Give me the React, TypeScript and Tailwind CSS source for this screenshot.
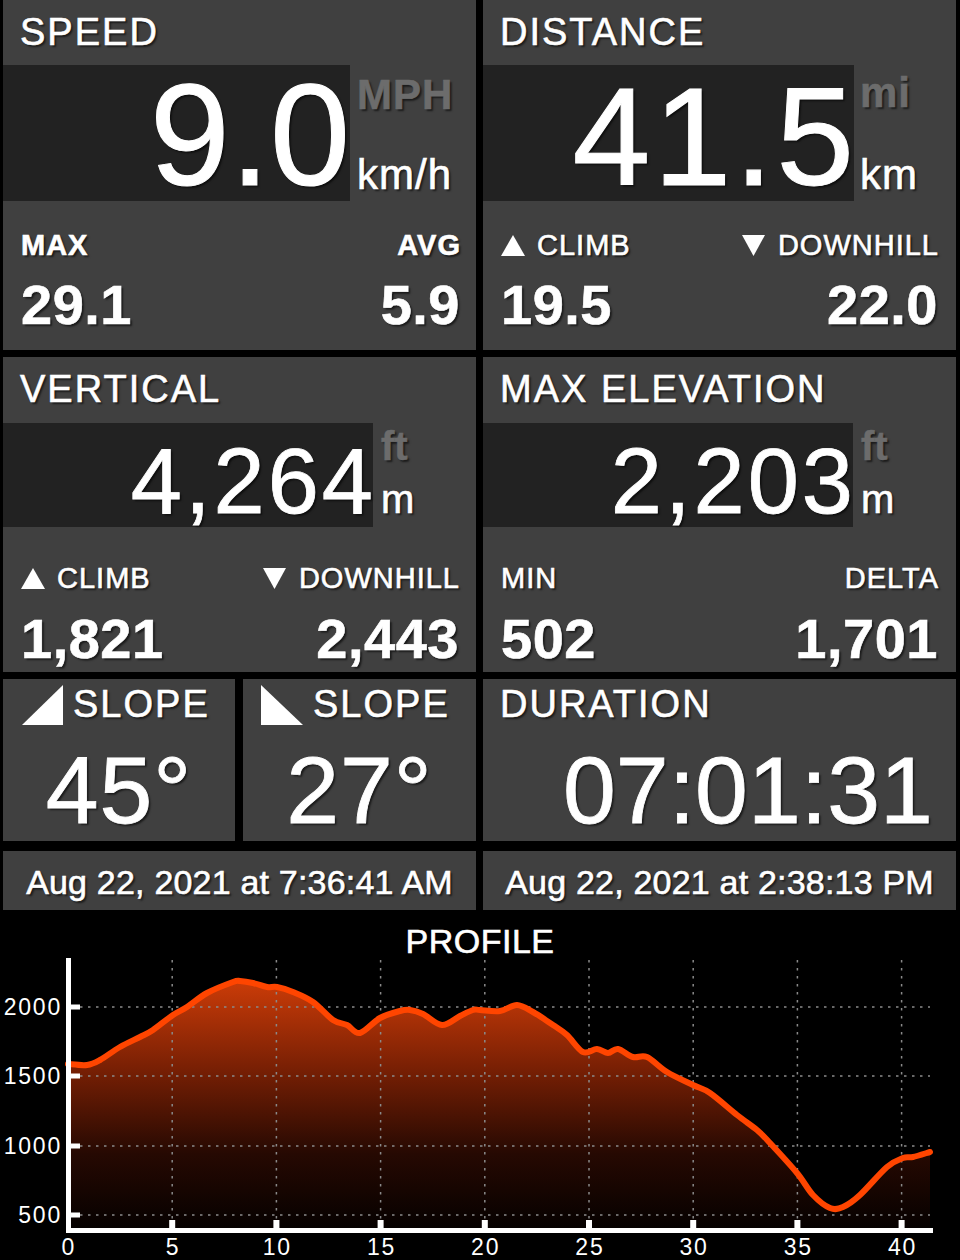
const shadow = '[text-shadow:2px_2px_2px_rgba(0,0,0,0.6)]';

type Stat = { label: string; value: string; tri?: 'up' | 'down'; bold?: boolean };

function Tri({ dir }: { dir: 'up' | 'down' }) {
  if (dir === 'up') {
    return (
      <svg width="24" height="21" viewBox="0 0 24 21" className="shrink-0">
        <polygon points="12,0 24,21 0,21" fill="#ffffff" />
      </svg>
    );
  }
  return (
    <svg width="23" height="21" viewBox="0 0 23 21" className="shrink-0">
      <polygon points="0,0 23,0 11.5,21" fill="#ffffff" />
    </svg>
  );
}

function Label({ stat }: { stat: Stat }) {
  return (
    <div className={`flex items-center ${stat.bold ? 'font-bold' : ''}`}>
      {stat.tri && (
        <span className={stat.tri === 'up' ? 'mr-[12px]' : 'mr-[13px]'}>
          <Tri dir={stat.tri} />
        </span>
      )}
      <span className="tracking-[1px] -mr-[1px]">{stat.label}</span>
    </div>
  );
}

function Footer({ left, right, labelMt, valueMt, pr }: { left: Stat; right: Stat; labelMt: string; valueMt: string; pr: string }) {
  return (
    <div className={`pl-[18px] ${pr} ${shadow}`}>
      <div className={`${labelMt} flex justify-between items-center text-[29px] leading-none`}>
        <Label stat={left} />
        <Label stat={right} />
      </div>
      <div className={`${valueMt} flex justify-between text-[56px] font-bold leading-none tracking-[0.5px]`}>
        <span>{left.value}</span>
        <span>{right.value}</span>
      </div>
    </div>
  );
}

const pts: [number, number][] = [
  [68, 1064], [87, 1065], [100, 1060], [120, 1047], [140, 1037], [153, 1030], [173, 1015], [187, 1007],
  [207, 993], [233, 982], [240, 981], [253, 983], [267, 987], [277, 987], [293, 992], [313, 1002],
  [333, 1020], [347, 1025], [360, 1033], [380, 1018], [400, 1011], [410, 1010], [423, 1014], [442, 1025],
  [460, 1016], [473, 1010], [480, 1010], [500, 1011], [517, 1005], [533, 1012], [553, 1025], [567, 1035],
  [583, 1052], [597, 1049], [608, 1053], [618, 1049], [633, 1057], [647, 1057], [667, 1072], [693, 1085],
  [710, 1093], [737, 1115], [757, 1130], [770, 1143], [797, 1173], [813, 1195], [830, 1208], [843, 1207],
  [860, 1195], [887, 1167], [903, 1158], [913, 1157], [930, 1152],
];

function smooth(p: [number, number][]) {
  let d = `M${p[0][0]},${p[0][1]}`;
  for (let i = 0; i < p.length - 1; i++) {
    const p0 = p[i - 1] || p[i];
    const p1 = p[i];
    const p2 = p[i + 1];
    const p3 = p[i + 2] || p2;
    const c1x = p1[0] + (p2[0] - p0[0]) / 6;
    const c1y = p1[1] + (p2[1] - p0[1]) / 6;
    const c2x = p2[0] - (p3[0] - p1[0]) / 6;
    const c2y = p2[1] - (p3[1] - p1[1]) / 6;
    d += ` C${c1x.toFixed(1)},${c1y.toFixed(1)} ${c2x.toFixed(1)},${c2y.toFixed(1)} ${p2[0]},${p2[1]}`;
  }
  return d;
}

const yTicks = [
  { v: '2000', y: 1007 },
  { v: '1500', y: 1076 },
  { v: '1000', y: 1146 },
  { v: '500', y: 1215 },
];
const xTicks = [0, 5, 10, 15, 20, 25, 30, 35, 40].map((k) => ({ k, x: 68 + k * 20.84 }));

function Profile() {
  const line = smooth(pts);
  const area = `${line} L930,1228 L68,1228 Z`;
  return (
    <div className="h-[350px] bg-black">
      <div className={`h-[48px] pt-[14px] text-center text-[34px] leading-none tracking-[0.5px] ${shadow}`}>PROFILE</div>
      <svg width="960" height="302" viewBox="0 958 960 302" className="block [-webkit-text-stroke-width:0px]">
        <defs>
          <linearGradient id="fill" x1="0" y1="980" x2="0" y2="1228" gradientUnits="userSpaceOnUse">
            <stop offset="0" stopColor="#cc3c08" />
            <stop offset="0.35" stopColor="#7a2004" />
            <stop offset="0.7" stopColor="#260902" />
            <stop offset="1" stopColor="#060100" />
          </linearGradient>
        </defs>
        <path d={area} fill="url(#fill)" />
        {yTicks.map((t) => (
          <line key={t.v} x1="72" x2="930" y1={t.y} y2={t.y} stroke="#8a8a8a" strokeWidth="1.5" strokeDasharray="2.5 5.5" />
        ))}
        {xTicks.slice(1).map((t) => (
          <line key={t.k} x1={t.x} x2={t.x} y1="960" y2="1226" stroke="#8a8a8a" strokeWidth="1.5" strokeDasharray="2.5 5.5" />
        ))}
        <path d={line} fill="none" stroke="#ff4500" strokeWidth="6" strokeLinejoin="round" strokeLinecap="round" />
        <rect x="66" y="957" width="5" height="276" fill="#ffffff" />
        <rect x="66" y="1228" width="867" height="5" fill="#ffffff" />
        {yTicks.map((t) => (
          <rect key={t.v} x="71" y={t.y - 2.5} width="9" height="5" fill="#ffffff" />
        ))}
        {xTicks.slice(1).map((t) => (
          <rect key={t.k} x={t.x - 3} y="1220" width="6" height="8" fill="#ffffff" />
        ))}
        <g fill="#ffffff" fontFamily="'Liberation Sans', Arial, sans-serif" fontSize="23" letterSpacing="1.8">
          {yTicks.map((t) => (
            <text key={t.v} x="62" y={t.y + 8} textAnchor="end">{t.v}</text>
          ))}
          {xTicks.map((t) => (
            <text key={t.k} x={t.x + 0.9} y="1255" textAnchor="middle">{t.k}</text>
          ))}
        </g>
      </svg>
    </div>
  );
}

const title = `text-[38px] leading-none tracking-[2px] ${shadow}`;

export default function App() {
  return (
    <div className="w-[960px] h-[1260px] bg-black text-white font-['Liberation_Sans',Arial,sans-serif] [-webkit-text-stroke-width:0.6px] overflow-hidden">
      <div className="pl-[3px] pr-[4px]">
        {/* speed / distance */}
        <div className="grid grid-cols-2 gap-x-[7px]">
          <div className="h-[350px] bg-[#404040] flex flex-col">
            <div className={`h-[65px] pl-[17px] pt-[13px] ${title}`}>SPEED</div>
            <div className="flex h-[136px]">
              <div className="w-[347px] shrink-0 bg-[#222222] flex justify-end">
                <span className={`text-[144px] leading-none -mt-[1px] [-webkit-text-stroke-width:1px] ${shadow}`}>9.0</span>
              </div>
              <div className={`flex flex-col pl-[7px] tracking-[1px] ${shadow}`}>
                <span className="mt-[9px] text-[42px] leading-none font-bold text-[#6c6c6c]">MPH</span>
                <span className="mt-[38px] text-[42px] leading-none">km/h</span>
              </div>
            </div>
            <Footer
              left={{ label: 'MAX', value: '29.1', bold: true }}
              right={{ label: 'AVG', value: '5.9', bold: true }}
              labelMt="mt-[30px]"
              valueMt="mt-[17px]"
              pr="pr-[16px]"
            />
          </div>
          <div className="h-[350px] bg-[#404040] flex flex-col">
            <div className={`h-[65px] pl-[17px] pt-[13px] ${title}`}>DISTANCE</div>
            <div className="flex h-[136px]">
              <div className="w-[371px] shrink-0 bg-[#222222] flex justify-end">
                <span className={`text-[140px] leading-none tracking-[3px] -mr-[3px] mt-[2px] [-webkit-text-stroke-width:1px] ${shadow}`}>41.5</span>
              </div>
              <div className={`flex flex-col pl-[6px] tracking-[1px] ${shadow}`}>
                <span className="mt-[7px] text-[42px] leading-none font-bold text-[#6c6c6c]">mi</span>
                <span className="mt-[40px] text-[42px] leading-none">km</span>
              </div>
            </div>
            <Footer
              left={{ label: 'CLIMB', value: '19.5', tri: 'up' }}
              right={{ label: 'DOWNHILL', value: '22.0', tri: 'down' }}
              labelMt="mt-[30px]"
              valueMt="mt-[17px]"
              pr="pr-[18px]"
            />
          </div>
        </div>

        {/* vertical / elevation */}
        <div className="grid grid-cols-2 gap-x-[7px] mt-[7px]">
          <div className="h-[315px] bg-[#404040] flex flex-col">
            <div className={`h-[66px] pl-[17px] pt-[13px] ${title}`}>VERTICAL</div>
            <div className="flex h-[104px]">
              <div className="w-[370px] shrink-0 bg-[#222222] flex justify-end">
                <span className={`text-[92px] leading-none tracking-[3px] -mr-[3px] mt-[12px] [-webkit-text-stroke-width:0.8px] ${shadow}`}>4,264</span>
              </div>
              <div className={`flex flex-col pl-[8px] ${shadow}`}>
                <span className="mt-[3px] text-[40px] leading-none font-bold text-[#6c6c6c]">ft</span>
                <span className="mt-[13px] text-[40px] leading-none">m</span>
              </div>
            </div>
            <Footer
              left={{ label: 'CLIMB', value: '1,821', tri: 'up' }}
              right={{ label: 'DOWNHILL', value: '2,443', tri: 'down' }}
              labelMt="mt-[37px]"
              valueMt="mt-[18px]"
              pr="pr-[17px]"
            />
          </div>
          <div className="h-[315px] bg-[#404040] flex flex-col">
            <div className={`h-[66px] pl-[17px] pt-[13px] ${title}`}>MAX ELEVATION</div>
            <div className="flex h-[104px]">
              <div className="w-[370px] shrink-0 bg-[#222222] flex justify-end">
                <span className={`text-[92px] leading-none tracking-[3px] -mr-[3px] mt-[12px] [-webkit-text-stroke-width:0.8px] ${shadow}`}>2,203</span>
              </div>
              <div className={`flex flex-col pl-[8px] ${shadow}`}>
                <span className="mt-[3px] text-[40px] leading-none font-bold text-[#6c6c6c]">ft</span>
                <span className="mt-[13px] text-[40px] leading-none">m</span>
              </div>
            </div>
            <Footer
              left={{ label: 'MIN', value: '502' }}
              right={{ label: 'DELTA', value: '1,701' }}
              labelMt="mt-[37px]"
              valueMt="mt-[18px]"
              pr="pr-[18px]"
            />
          </div>
        </div>

        {/* slopes / duration */}
        <div className="grid grid-cols-2 gap-x-[7px] mt-[7px]">
          <div className="grid grid-cols-[232px_1fr] gap-x-[8px]">
            <div className="h-[162px] bg-[#404040]">
              <div className={`h-[40px] mt-[6px] pl-[19px] flex items-start ${shadow}`}>
                <svg width="41" height="40" viewBox="0 0 41 40" className="shrink-0">
                  <polygon points="0,40 41,0 41,40" fill="#ffffff" />
                </svg>
                <span className="ml-[10px] text-[38px] leading-none tracking-[2px]">SLOPE</span>
              </div>
              <div className={`mt-[18px] text-center text-[95px] leading-none tracking-[1px] [-webkit-text-stroke-width:0.8px] ${shadow}`}>45°</div>
            </div>
            <div className="h-[162px] bg-[#404040]">
              <div className={`h-[40px] mt-[6px] pl-[18px] flex items-start ${shadow}`}>
                <svg width="42" height="40" viewBox="0 0 42 40" className="shrink-0">
                  <polygon points="0,0 0,40 42,40" fill="#ffffff" />
                </svg>
                <span className="ml-[10px] text-[38px] leading-none tracking-[2px]">SLOPE</span>
              </div>
              <div className={`mt-[18px] text-center text-[95px] leading-none tracking-[1px] [-webkit-text-stroke-width:0.8px] ${shadow}`}>27°</div>
            </div>
          </div>
          <div className="h-[162px] bg-[#404040]">
            <div className={`h-[46px] pl-[17px] pt-[6px] ${title}`}>DURATION</div>
            <div className={`mt-[18px] pl-[80px] text-[95px] leading-none [-webkit-text-stroke-width:0.8px] ${shadow}`}>07:01:31</div>
          </div>
        </div>

        {/* timestamps */}
        <div className="grid grid-cols-2 gap-x-[7px] mt-[10px]">
          <div className={`h-[59px] bg-[#404040] flex items-center justify-center pt-[2px] text-[34px] leading-none tracking-[0.2px] ${shadow}`}>
            Aug 22, 2021 at 7:36:41 AM
          </div>
          <div className={`h-[59px] bg-[#404040] flex items-center justify-center pt-[2px] text-[34px] leading-none tracking-[0.2px] ${shadow}`}>
            Aug 22, 2021 at 2:38:13 PM
          </div>
        </div>
      </div>

      <Profile />
    </div>
  );
}
